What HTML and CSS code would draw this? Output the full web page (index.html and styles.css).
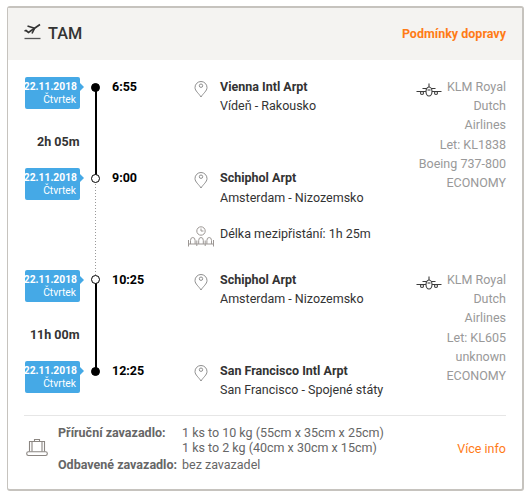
FILE: index.html
```html
<!DOCTYPE html>
<html lang="cs">
<head>
<meta charset="utf-8">
<title>TAM</title>
<link rel="stylesheet" href="styles.css">
</head>
<body>
<svg class="defs" width="0" height="0">
  <symbol id="pin" viewBox="0 0 14 17"><g fill="none" stroke="#8e8e8e" stroke-width="1"><path d="M7 16C5 12.500 1 10 1 6.500a6 6 0 0 1 12 0C13 10 9 12.500 7 16Z"/><circle cx="7" cy="4.700" r="1.700"/></g></symbol>
  <symbol id="plane" viewBox="0 0 26 14"><g fill="none" stroke="#3c3c3c" stroke-width="1.100"><path d="M13 .5V5M6.500 5.500H11M15 5.500h4.500M.5 8.500H10M16 8.500h9.500"/><ellipse cx="13" cy="8.500" rx="3" ry="4.500" fill="#fff"/><circle cx="6" cy="10" r="1.500"/><circle cx="20" cy="10" r="1.500"/><path d="M11.500 7h3"/></g></symbol>
</svg>
<article class="card">
  <header class="head">
    <svg class="takeoff" width="17" height="17" viewBox="0 0 17 17"><path d="M.5 15.500h16" stroke="#555" stroke-width="1.300"/><path d="M.5 8l1.500-.5 2.500 2L16 1.500" fill="none" stroke="#333" stroke-width="1.700"/><path d="M3.500 3l7 2.300M10.500 5.500L8 10.500" fill="none" stroke="#333" stroke-width="1.600"/></svg>
    <h1>TAM</h1>
    <a class="terms">Podmínky dopravy</a>
  </header>
  <main class="route">
    <section class="leg">
      <div class="stops">
        <div class="stop long">
          <div class="when"><div class="tag"><b>22.11.2018</b><span>Čtvrtek</span></div><b class="duration">2h 05m</b></div>
          <div class="rail solid"><i class="dot full"></i></div>
          <b class="time">6:55</b>
          <svg class="pin"><use href="#pin"/></svg>
          <div class="place"><b>Vienna Intl Arpt</b><span>Vídeň - Rakousko</span></div>
        </div>
        <div class="stop wait">
          <div class="when"><div class="tag"><b>22.11.2018</b><span>Čtvrtek</span></div></div>
          <div class="rail dotted"><i class="dot"></i></div>
          <b class="time">9:00</b>
          <div class="icons"><svg class="pin"><use href="#pin"/></svg>
            <svg class="lounge" width="26" height="22" viewBox="0 0 26 22"><g fill="none" stroke="#9c9794" stroke-width="1"><circle cx="13" cy="5" r="4.200"/><path d="M13 2.500V5h2.500M.5 14v6.500M25.500 14v6.500M8.800 14.500v5.500M17.200 14.500v5.500M.5 18h25"/><path d="M2.500 18V14.500a2.300 3 0 0 1 4.600 0v3.500M10.700 18V14.500a2.300 3 0 0 1 4.600 0v3.500M18.900 18V14.500a2.300 3 0 0 1 4.600 0v3.500"/></g></svg>
          </div>
          <div class="place"><b>Schiphol Arpt</b><span>Amsterdam - Nizozemsko</span><span class="layover">Délka mezipřistání: 1h 25m</span></div>
        </div>
      </div>
      <div class="carrier"><svg class="plane"><use href="#plane"/></svg>KLM Royal<br>Dutch<br>Airlines<br>Let: KL1838<br>Boeing 737-800<br>ECONOMY</div>
    </section>
    <section class="leg">
      <div class="stops">
        <div class="stop long">
          <div class="when"><div class="tag"><b>22.11.2018</b><span>Čtvrtek</span></div><b class="duration">11h 00m</b></div>
          <div class="rail solid"><i class="dot"></i></div>
          <b class="time">10:25</b>
          <svg class="pin"><use href="#pin"/></svg>
          <div class="place"><b>Schiphol Arpt</b><span>Amsterdam - Nizozemsko</span></div>
        </div>
        <div class="stop last">
          <div class="when"><div class="tag"><b>22.11.2018</b><span>Čtvrtek</span></div></div>
          <div class="rail"><i class="dot full"></i></div>
          <b class="time">12:25</b>
          <svg class="pin"><use href="#pin"/></svg>
          <div class="place"><b>San Francisco Intl Arpt</b><span>San Francisco - Spojené státy</span></div>
        </div>
      </div>
      <div class="carrier"><svg class="plane"><use href="#plane"/></svg>KLM Royal<br>Dutch<br>Airlines<br>Let: KL605<br>unknown<br>ECONOMY</div>
    </section>
  </main>
  <footer class="bags">
    <svg class="bag" width="22" height="18" viewBox="0 0 22 18"><g fill="none" stroke="#8b8682" stroke-width="1.100"><path d="M8.500 2.500v-2h5v2"/><path d="M3.500 12.500v-10h15v10M6 2.500v10M16 2.500v10"/><rect x=".7" y="12.700" width="20.600" height="3.800" rx="1.700"/></g></svg>
    <dl>
      <dt>Příruční zavazadlo:</dt><dd>1 ks to 10 kg (55cm x 35cm x 25cm)<br>1 ks to 2 kg (40cm x 30cm x 15cm)</dd>
      <dt>Odbavené zavazadlo:</dt><dd>bez zavazadel</dd>
    </dl>
    <a class="more">Více info</a>
  </footer>
</article>
</body>
</html>
```
FILE: styles.css
```css
* { box-sizing: border-box; }
body { margin: 0; padding: 6px 6px 0 7px; background: #fff; font: 12.5px/19.2px Roboto, "Liberation Sans", sans-serif; color: #333; }
.defs { position: absolute; }
b { font-weight: 700; }
.card { height: 485px; border: 2px solid #c6c3be; border-left-width: 1px; border-radius: 3px; }
.head { height: 52px; background: #f4f3f1; display: flex; align-items: center; padding: 0 16px; }
.takeoff { margin-top: -6px; }
h1 { margin: 0 auto 0 7px; font-size: 16.300px; font-weight: 500; line-height: 20px; }
.terms { color: #ff7b17; font-weight: 700; margin-top: -1px; }
.route { padding: 17px 16px 0 17px; }
.leg { display: flex; justify-content: space-between; }
.stop { display: grid; grid-template-columns: 55px 31px 76px 32px auto; height: 92px; }
.stop.long { height: 91.300px; }
.stop.wait { height: 101.700px; }
.stop.last { height: 54px; }
.when { text-align: right; }
.tag { position: relative; height: 32px; padding: 3px 4px 0 0; border-radius: 2px; background: #45a9e6; color: #fff; font-size: 10.300px; line-height: 13px; display: flex; flex-direction: column; align-items: flex-end; }
.tag b { white-space: nowrap; margin-right: -1px; }
.tag::after { content: ""; position: absolute; left: 100%; top: 6px; border: 4px solid transparent; border-left-color: #45a9e6; border-right: 0; }
.duration { display: block; margin: 23.300px .5px 0 0; }
.rail { position: relative; }
.rail::before { content: ""; position: absolute; left: 15px; top: 10px; height: 100%; }
.solid::before { border-left: 2px solid #000; }
.dotted::before { width: 1px; background: repeating-linear-gradient(#999 0 1px, transparent 1px 3px); }
.dot { position: absolute; left: 11px; top: 5.500px; width: 9px; height: 9px; border: 1px solid #000; border-radius: 50%; background: #fff; z-index: 1; }
.dot.full { background: #000; }
.time { color: #000; padding-left: 1px; }
.pin { display: block; width: 14px; height: 17px; margin: 4px 0 0 7px; }
.lounge { display: block; margin: 37px 0 0 1px; }
.place { display: flex; flex-direction: column; padding-left: 1px; white-space: nowrap; }
.layover { margin-top: 17px; }
.carrier { width: 90px; text-align: right; color: #999; white-space: nowrap; }
.plane { float: left; width: 26px; height: 14px; margin-top: 6px; }
.bags { display: flex; align-items: center; height: 74px; margin: 0 16px; border-top: 1px solid #e6e6e6; color: #666; }
.bag { margin: -10px 10px 0 2px; }
dl { display: grid; grid-template-columns: 124px auto; line-height: 15px; row-gap: 2px; margin: -8px auto 0 0; }
dt { font-weight: 700; white-space: nowrap; }
dd { margin: 0; white-space: nowrap; }
.more { color: #ff7b17; margin-top: -8px; }
```
